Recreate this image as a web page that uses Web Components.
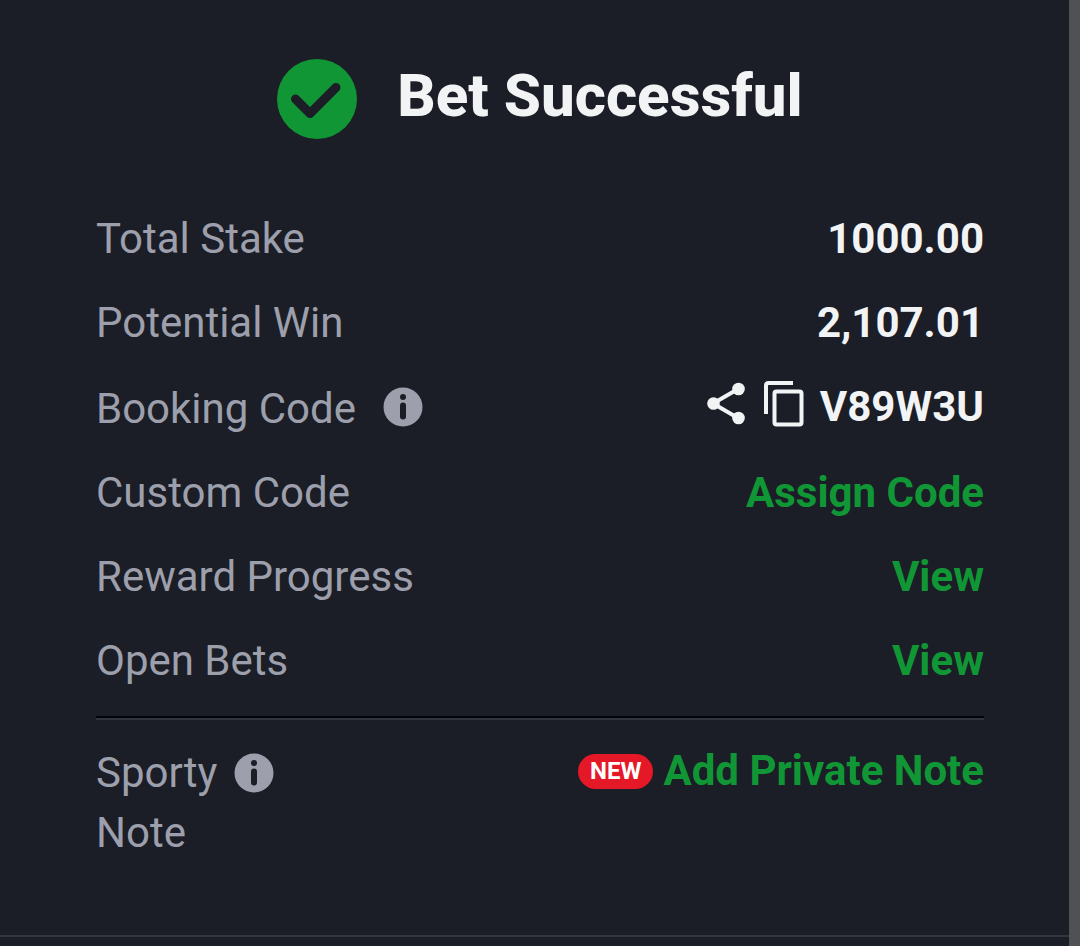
<!DOCTYPE html>
<html lang="en">
<head>
<meta charset="utf-8">
<meta name="viewport" content="width=device-width, initial-scale=1">
<title>Bet Successful</title>
<style>
  :root {
    --bg: #1b1e26;
    --text: #f2f3f5;
    --muted: #9da0ac;
    --green: #119636;
    --red: #e41827;
    --line: #33363f;
  }
  body {
    margin: 0;
    background: var(--bg);
    color: var(--text);
    font: 400 42px/60px Roboto, "Liberation Sans", sans-serif;
  }
</style>
</head>
<body>
<bet-receipt>
  <result-title slot="title">Bet Successful</result-title>
  <receipt-row><span slot="label">Total Stake</span>1000.00</receipt-row>
  <receipt-row><span slot="label">Potential Win</span>2,107.01</receipt-row>
  <receipt-row class="code">
    <span slot="label">Booking Code</span>
    <info-button slot="info" label="About booking codes"></info-button>
    <code-actions>V89W3U</code-actions>
  </receipt-row>
  <receipt-row><span slot="label">Custom Code</span><action-link>Assign Code</action-link></receipt-row>
  <receipt-row><span slot="label">Reward Progress</span><action-link>View</action-link></receipt-row>
  <receipt-row><span slot="label">Open Bets</span><action-link>View</action-link></receipt-row>
  <receipt-row slot="note" narrow>
    <span slot="label">Sporty Note</span>
    <info-button slot="info" label="About Sporty Note"></info-button>
    <new-badge>NEW</new-badge>
    <action-link>Add Private Note</action-link>
  </receipt-row>
</bet-receipt>

<script>
  function define(name, markup, setup) {
    const template = document.createElement('template');
    template.innerHTML = markup;
    customElements.define(name, class extends HTMLElement {
      constructor() {
        super();
        this.attachShadow({ mode: 'open' }).append(template.content.cloneNode(true));
      }
      connectedCallback() { if (setup) setup(this); }
    });
  }

  define('bet-receipt', `
    <style>
      :host { display: flex; flex-direction: column; position: relative; min-height: 100vh; }
      main { padding: 59px 96px 72px; }
      .rows { display: flex; flex-direction: column; gap: 24px; margin-top: 70px; }
      hr { height: 0; margin: 25px 0 23px; border: solid; border-width: 2px 0; border-color: #020308 transparent var(--line); }
      footer { border-top: 2px solid var(--line); }
      .thumb { position: absolute; inset: 0 0 0 auto; width: 11px; background: #505155; }
    </style>
    <main>
      <slot name="title"></slot>
      <div class="rows"><slot></slot></div>
      <hr>
      <slot name="note"></slot>
    </main>
    <footer></footer>
    <div class="thumb"></div>`);

  define('result-title', `
    <style>
      :host { display: flex; justify-content: center; align-items: flex-start; gap: 40px; }
      svg { width: 80px; height: 80px; flex: none; }
      h1 { margin: 0; font-size: 60px; line-height: 74px; font-weight: 800; }
    </style>
    <svg viewBox="0 0 80 80" aria-hidden="true">
      <circle cx="40" cy="40" r="40" fill="var(--green)"/>
      <path d="M18.500 40L33 54.500L59 28.500" fill="none" stroke="var(--bg)" stroke-width="9" stroke-linecap="round" stroke-linejoin="round"/>
    </svg>
    <h1><slot></slot></h1>`);

  define('receipt-row', `
    <style>
      :host { display: flex; justify-content: space-between; align-items: flex-start; }
      :host(.code) { padding-top: 2px; }
      .label { display: flex; color: var(--muted); gap: 27px; }
      :host([narrow]) .label { gap: 17px; }
      :host([narrow]) ::slotted([slot=label]) { width: min-content; }
      :host([narrow]) ::slotted([slot=info]) { --info-height: 60px; }
      .value { display: flex; align-items: center; gap: 10px; font-weight: 700; }
      :host(.code) .value, :host([narrow]) .value { margin-top: -2px; }
    </style>
    <div class="label"><slot name="label"></slot><slot name="info"></slot></div>
    <div class="value"><slot></slot></div>`);

  define('info-button', `
    <style>
      :host { display: block; height: 60px; }
      button { display: flex; align-items: center; height: var(--info-height, 56px); padding: 0; border: 0; background: none; cursor: pointer; }
      svg { width: 40px; height: 40px; }
    </style>
    <button type="button">
      <svg viewBox="0 0 40 40" aria-hidden="true">
        <circle cx="20" cy="20" r="19.500" fill="var(--muted)"/>
        <circle cx="20" cy="10" r="3" fill="var(--bg)"/>
        <path d="M20 18.500V29.500" stroke="var(--bg)" stroke-width="6" stroke-linecap="round"/>
      </svg>
    </button>`,
    host => host.shadowRoot.querySelector('button').setAttribute('aria-label', host.getAttribute('label')));

  define('code-actions', `
    <style>
      :host { display: flex; align-items: center; gap: 16px; }
      button { display: flex; padding: 0; border: 0; background: none; color: inherit; cursor: pointer; }
      svg { height: 48px; margin-bottom: 6px; }
    </style>
    <button type="button" aria-label="Share booking code">
      <svg viewBox="0 0 42 48" width="42" aria-hidden="true">
        <path d="M34 9L9 23.500L34 38" fill="none" stroke="currentColor" stroke-width="4"/>
        <g fill="currentColor"><circle cx="34.500" cy="9" r="6.300"/><circle cx="9.500" cy="23.500" r="6.300"/><circle cx="34.500" cy="38" r="6.300"/></g>
      </svg>
    </button>
    <button type="button" aria-label="Copy booking code">
      <svg viewBox="0 0 42 48" width="42" aria-hidden="true" fill="none" stroke="currentColor" stroke-width="4">
        <path d="M4 34V5.500Q4 3 6.500 3H31"/>
        <rect x="12.500" y="11.500" width="27" height="33" rx="2"/>
      </svg>
    </button>
    <span><slot></slot></span>`);

  define('action-link', `
    <style>
      :host { display: block; }
      a { color: var(--green); text-decoration: none; }
    </style>
    <a href="#"><slot></slot></a>`);

  define('new-badge', `
    <style>
      :host { display: block; padding: 0 12px; border-radius: 18px; background: var(--red); color: #fff; font-size: 24px; line-height: 35px; font-weight: 700; }
    </style>
    <slot></slot>`);
</script>
</body>
</html>
